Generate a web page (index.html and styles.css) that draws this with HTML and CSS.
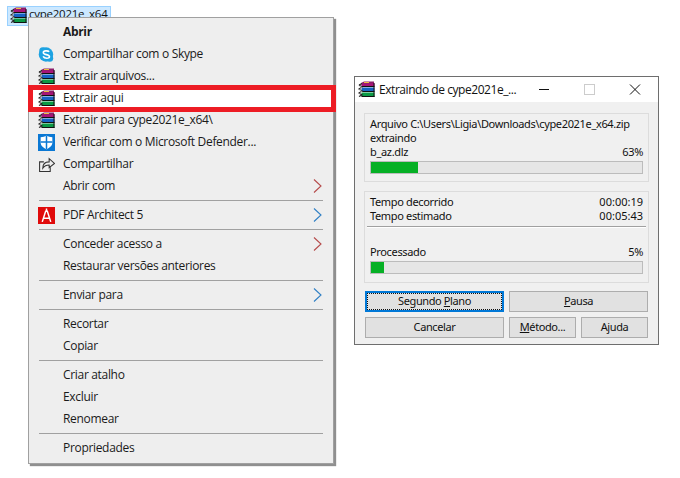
FILE: index.html
```html
<!DOCTYPE html>
<html lang="pt">
<head>
<meta charset="utf-8">
<title>Extraindo</title>
<link rel="stylesheet" href="styles.css">
</head>
<body>
<svg class="defs" width="0" height="0">
  <defs>
    <symbol id="rar" viewBox="0 0 17 17">
      <path d="M3 2 6 .5h10v4H4z" fill="#8c1f6a"/>
      <path d="M6 1.500h5" stroke="#e8c040" stroke-width="1"/>
      <rect x="3.500" y="2.500" width="13" height="3" fill="#a81478"/>
      <rect x="3.500" y="6.500" width="13" height="4" fill="#1763c4"/>
      <rect x="3.500" y="11.500" width="13" height="4" fill="#0b9a45"/>
      <path d="M3.500 5.500h13M3.500 10.500h13M3.500 15.500h13M16 2v14" stroke="#111" stroke-width="1" fill="none"/>
      <path d="M1 4 4 2.500M1 4l3 2L1 8l3 2-3 2 3 2-3 1.500" stroke="#222" stroke-width="1.300" fill="none"/>
      <path d="M1.500 5l2.500 1.500L1.500 9l2.500 1.500L1.500 13" stroke="#ddd" stroke-width=".7" fill="none"/>
    </symbol>
    <symbol id="chev" viewBox="0 0 9 14"><path d="M1 .5 8 7l-7 6.500" fill="none" stroke="currentColor" stroke-width="1.100"/></symbol>
  </defs>
</svg>

<div class="file">
  <svg class="ico"><use href="#rar"/></svg>
  <span>cype2021e_x64</span>
</div>

<nav class="menu">
  <div class="row"><span class="slot"></span><b>Abrir</b></div>
  <div class="row"><span class="slot"><svg class="ico" viewBox="0 0 16 16"><circle cx="7.500" cy="8" r="6.800" fill="#1ea3e2"/><circle cx="4.500" cy="4.500" r="3.300" fill="#1ea3e2"/><circle cx="11" cy="11.500" r="3.300" fill="#1ea3e2"/><path d="M10.500 5.500C9.500 4.200 5 4.200 5 6.300c0 2.300 5.800 1.300 5.800 3.700 0 2.200-4.800 2-6-.2" fill="none" stroke="#fff" stroke-width="1.500"/></svg></span>Compartilhar com o Skype</div>
  <div class="row"><span class="slot"><svg class="ico"><use href="#rar"/></svg></span>Extrair arquivos...</div>
  <div class="row on"><span class="slot"><svg class="ico"><use href="#rar"/></svg></span>Extrair aqui</div>
  <div class="row"><span class="slot"><svg class="ico"><use href="#rar"/></svg></span>Extrair para cype2021e_x64\</div>
  <div class="row"><span class="slot"><svg class="ico" viewBox="0 0 16 16"><rect width="16" height="16" fill="#0a78d4"/><path d="M8 1.500c1.500 1 3.500 1.500 5.500 1.500v5c0 3-2.500 5-5.500 6.500C5 13 2.500 11 2.500 8V3c2 0 4-.5 5.500-1.500z" fill="#fff"/><path d="M8 1.500v13M2.500 7.500h11" stroke="#0a78d4" stroke-width="1.400"/></svg></span>Verificar com o Microsoft Defender...</div>
  <div class="row"><span class="slot"><svg class="ico" viewBox="0 0 16 16"><path d="M5.500 5.500H1.500v9h10v-4" fill="none" stroke="#333" stroke-width="1"/><path d="M4.500 11.500c0-4 2.500-6 6-6V2.500l5 4.500-5 4V8.500c-3 0-4.500 .8-6 3z" fill="none" stroke="#333" stroke-width="1"/></svg></span>Compartilhar</div>
  <div class="row"><span class="slot"></span>Abrir com<svg class="chev red"><use href="#chev"/></svg></div>
  <div class="sep"></div>
  <div class="row"><span class="slot"><svg class="ico" viewBox="0 0 16 16"><rect width="16" height="16" fill="#e00a0a"/><path d="M4 14 7.200 4h1.600L12 14M5.500 10.500h5M8 1.500v3" fill="none" stroke="#fff" stroke-width="1.400"/></svg></span>PDF Architect 5<svg class="chev blue"><use href="#chev"/></svg></div>
  <div class="sep"></div>
  <div class="row"><span class="slot"></span>Conceder acesso a<svg class="chev red"><use href="#chev"/></svg></div>
  <div class="row"><span class="slot"></span>Restaurar versões anteriores</div>
  <div class="sep"></div>
  <div class="row"><span class="slot"></span>Enviar para<svg class="chev blue"><use href="#chev"/></svg></div>
  <div class="sep"></div>
  <div class="row"><span class="slot"></span>Recortar</div>
  <div class="row"><span class="slot"></span>Copiar</div>
  <div class="sep"></div>
  <div class="row"><span class="slot"></span>Criar atalho</div>
  <div class="row"><span class="slot"></span>Excluir</div>
  <div class="row"><span class="slot"></span>Renomear</div>
  <div class="sep"></div>
  <div class="row"><span class="slot"></span>Propriedades</div>
</nav>

<section class="win">
  <header class="title">
    <svg class="ico"><use href="#rar"/></svg>
    <span class="cap">Extraindo de cype2021e_...</span>
    <div class="ctl">
      <svg viewBox="0 0 45 11"><path d="M17 5.500h10" stroke="#111" stroke-width="1"/></svg>
      <svg viewBox="0 0 45 11"><rect x="17.500" y=".5" width="10" height="10" fill="none" stroke="#ccc"/></svg>
      <svg viewBox="0 0 45 11"><path d="M18 .5l10 10M28 .5l-10 10" stroke="#111" fill="none"/></svg>
    </div>
  </header>
  <div class="body">
    <div class="grp one">
      <div class="ln">Arquivo C:\Users\Ligia\Downloads\cype2021e_x64.zip</div>
      <div class="ln">extraindo</div>
      <div class="ln sp"><span>b_az.dlz</span><span>63%</span></div>
      <div class="bar"><i class="fill f1"></i></div>
    </div>
    <div class="grp two">
      <div class="ln sp"><span>Tempo decorrido</span><span class="num">00:00:19</span></div>
      <div class="ln sp"><span>Tempo estimado</span><span class="num">00:05:43</span></div>
      <hr class="rule">
      <div class="ln sp"><span>Processado</span><span>5%</span></div>
      <div class="bar"><i class="fill f2"></i></div>
    </div>
    <div class="btns">
      <div class="btn def"><span>Segundo <u>P</u>lano</span></div>
      <div class="btn wide"><u>P</u>ausa</div>
      <div class="btn">Cancelar</div>
      <div class="btn"><span><u>M</u>étodo...</span></div>
      <div class="btn">Ajuda</div>
    </div>
  </div>
</section>
</body>
</html>
```
FILE: styles.css
```css
* { box-sizing: border-box; }
html, body { margin: 0; height: 100%; background: #fff; overflow: hidden; }
body { position: relative; width: 680px; height: 478px; font: 12px/16px "Open Sans", "Noto Sans", sans-serif; color: #111; }
.defs { position: absolute; }
.ico { width: 17px; height: 17px; display: block; flex: none; }

.file { position: absolute; left: 7px; top: 6px; width: 104px; height: 20px; background: #cce8ff; border: 1px solid #99d1ff; display: flex; align-items: flex-start; padding-left: 2px; gap: 2px; }
.file span { line-height: 14px; font-size: 11.500px; letter-spacing: -.25px; }

.menu { position: absolute; left: 28px; top: 17px; width: 306px; height: 447px; background: #eee; border: 1px solid #a0a0a0; padding: 3px 2px 0; box-shadow: 2px 2px 1px #8f8f8f; }
.row { height: 22px; display: flex; align-items: center; position: relative; font-size: 12px; letter-spacing: -.32px; color: #1a1a1a; }
.row b { font-weight: 700; }
.slot { width: 32px; flex: none; padding-left: 7px; display: block; }
.sep { height: 7px; margin: 0 8px 0 8px; position: relative; }
.sep::before { content: ""; position: absolute; left: 0; right: 0; top: 3px; height: 1px; background: #a0a0a0; }
.chev { position: absolute; right: 9px; top: 4px; width: 9px; height: 14px; }
.red { color: #b54a4a; }
.blue { color: #2f7fc4; }
.on { background: #fff; }
.on::after { content: ""; position: absolute; left: -3px; right: -5px; top: -2px; bottom: -3px; border: 5px solid #ed1c24; }

.win { position: absolute; left: 354px; top: 76px; width: 305px; height: 269px; border: 1px solid #6e6e6e; background: #f0f0f0; font-family: "Noto Sans", sans-serif; }
.title { height: 25px; background: #fff; display: flex; align-items: center; padding: 0 1px 0 3px; gap: 4px; font-family: "Open Sans", sans-serif; }
.cap { flex: 1; min-width: 0; font-size: 12px; letter-spacing: -.45px; white-space: nowrap; }
.ctl { display: flex; flex: none; }
.ctl svg { width: 45px; height: 11px; display: block; flex: none; }
.body { padding: 11px 9px 0 9px; }
.grp { border: 1px solid #dcdcdc; padding: 0 5px; }
.one { height: 69px; padding-top: 3px; }
.two { height: 92px; margin-top: 9px; padding-top: 3px; }
.ln { font-size: 11px; line-height: 14px; color: #111; white-space: nowrap; letter-spacing: -.34px; }
.num { letter-spacing: 0; }
.sp { display: flex; justify-content: space-between; }
.bar { height: 13px; margin: 2px 0 0 0; background: #e6e6e6; border: 1px solid #bcbcbc; }
.fill { display: block; height: 100%; background: #06b025; }
.f1 { width: 47px; }
.f2 { width: 13px; }
.rule { height: 2px; border: 0; margin: 3px -3px 17px; background: linear-gradient(#a0a0a0 50%, #fff 50%); }
.btns { display: grid; grid-template-columns: 139px 67px 67px; grid-auto-rows: 21px; gap: 5px; margin: 8px 0 0 1px; }
.btn { display: flex; align-items: center; justify-content: center; background: #e1e1e1; border: 1px solid #adadad; font-size: 11px; letter-spacing: -.4px; color: #111; padding-bottom: 1px; }
.wide { grid-column: span 2; }
.def { border: 2px solid #0078d7; padding: 0; }
.def span { flex: 1; align-self: stretch; text-align: center; border: 1px dotted #111; line-height: 14px; }
```
